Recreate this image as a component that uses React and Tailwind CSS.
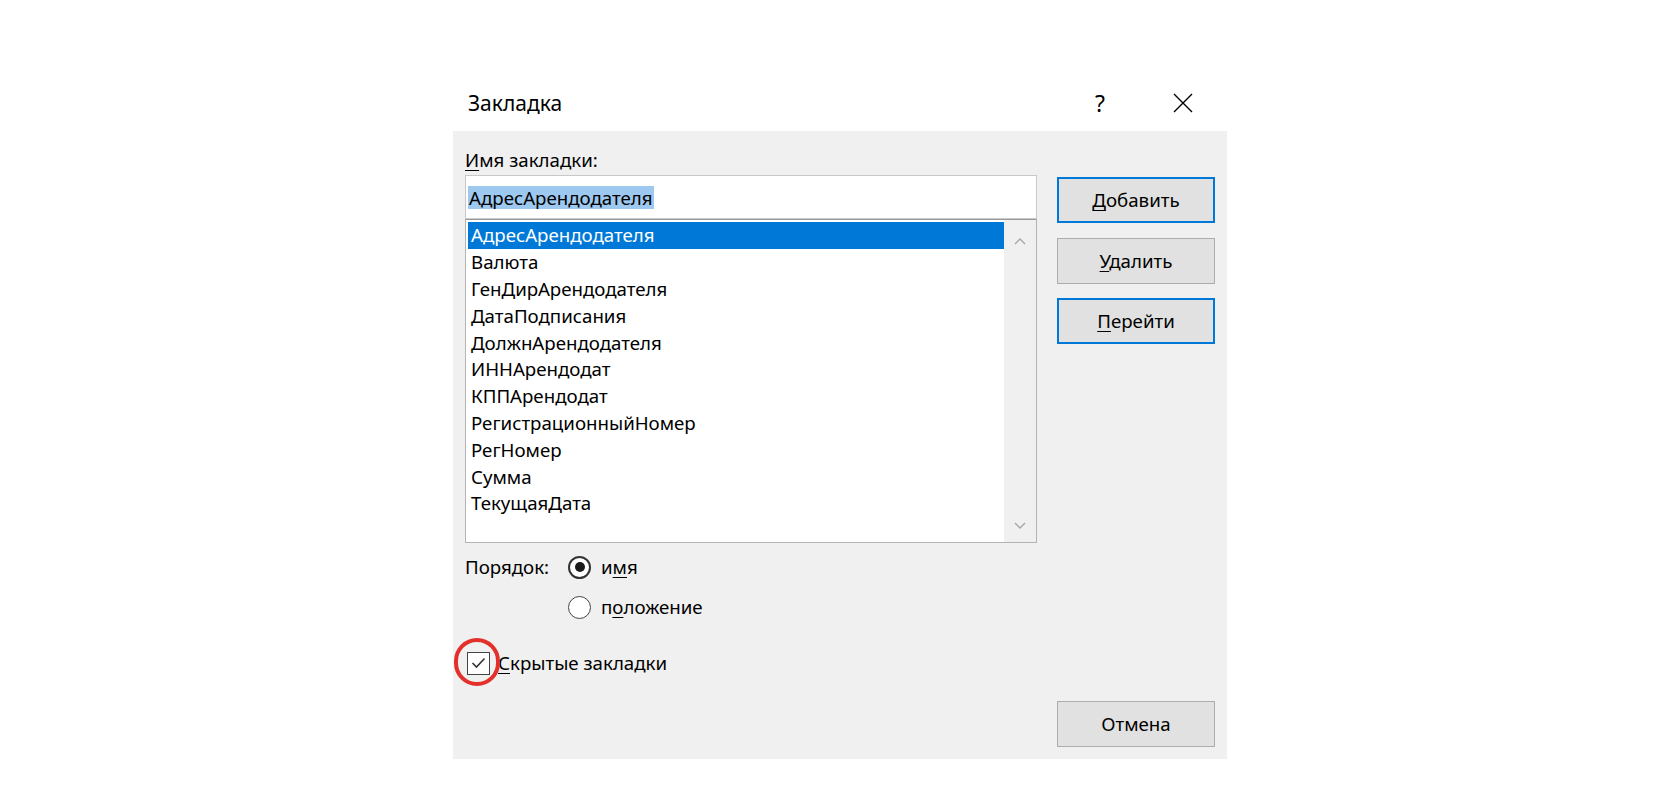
import React from "react";

const items = [
  "АдресАрендодателя",
  "Валюта",
  "ГенДирАрендодателя",
  "ДатаПодписания",
  "ДолжнАрендодателя",
  "ИННАрендодат",
  "КППАрендодат",
  "РегистрационныйНомер",
  "РегНомер",
  "Сумма",
  "ТекущаяДата",
];

function Btn({ children, primary }) {
  return (
    <div
      className={
        "h-[46px] w-[158px] flex items-center justify-center bg-[#e1e1e1] text-black " +
        (primary ? "border-2 border-[#0078d7]" : "border border-[#adadad]")
      }
    >
      {children}
    </div>
  );
}

export default function App() {
  return (
    <div
      className="w-full h-[798px] bg-white flex justify-center text-[18.7px] text-black"
      style={{ fontFamily: '"Noto Sans", "Open Sans", sans-serif' }}
    >
      <div className="w-[774px] pt-[75px] flex flex-col">
        {/* title bar */}
        <div className="h-[56px] flex items-center pl-[15px] pr-[34px]">
          <div className="flex-1 text-[21px] leading-none">Закладка</div>
          <div className="text-[23px] leading-none mr-[68px]">?</div>
          <svg width="20" height="20" viewBox="0 0 20 20">
            <path d="M1 1 L19 19 M19 1 L1 19" stroke="#000" strokeWidth="1.4" fill="none" />
          </svg>
        </div>
        {/* body */}
        <div className="h-[628px] bg-[#f0f0f0] flex px-[12px] pb-[12px]">
          <div className="w-[572px] flex flex-col">
            <div className="mt-[17px] h-[24px] leading-[24px] mb-[3px]">
              <u className="underline-offset-[3px]">И</u>мя закладки:
            </div>
            <div className="h-[44px] bg-white border border-[#c8c8c8] flex items-center pl-[2px]">
              <span className="bg-[#9dc8ef] px-[1px] leading-[23px]">АдресАрендодателя</span>
            </div>
            <div className="h-[324px] bg-white border border-[#b4b4b4] border-t-[#9a9a9a] flex">
              <div className="flex-1 pt-[2px] pl-[2px]">
                {items.map((t, i) => (
                  <div
                    key={t}
                    className={
                      "h-[26.8px] flex items-center pl-[3px] " +
                      (i === 0 ? "bg-[#0078d7] text-white" : "text-black")
                    }
                  >
                    {t}
                  </div>
                ))}
              </div>
              <div className="w-[32px] bg-[#f0f0f0] flex flex-col items-center justify-between pt-[18px] pb-[13px]">
                <svg width="12" height="7" viewBox="0 0 12 7">
                  <path d="M1 6 L6 1 L11 6" stroke="#a6a6a6" strokeWidth="1.4" fill="none" />
                </svg>
                <svg width="12" height="7" viewBox="0 0 12 7">
                  <path d="M1 1 L6 6 L11 1" stroke="#a6a6a6" strokeWidth="1.4" fill="none" />
                </svg>
              </div>
            </div>
            {/* order */}
            <div className="mt-[12px] flex">
              <div className="w-[103px] h-[24px] leading-[24px]">Порядок:</div>
              <div className="flex flex-col gap-[16px]">
                <div className="flex items-center h-[24px]">
                  <div className="w-[23px] h-[23px] rounded-full border-2 border-[#333] bg-white flex items-center justify-center">
                    <div className="w-[10px] h-[10px] rounded-full bg-[#1a1a1a]" />
                  </div>
                  <span className="ml-[10px]">
                    и<u className="underline-offset-[3px]">м</u>я
                  </span>
                </div>
                <div className="flex items-center h-[24px]">
                  <div className="w-[23px] h-[23px] rounded-full border-[1.5px] border-[#444] bg-white" />
                  <span className="ml-[10px]">
                    п<u className="underline-offset-[3px]">о</u>ложение
                  </span>
                </div>
              </div>
            </div>
            {/* checkbox */}
            <div className="mt-[32px] flex items-center relative h-[24px]">
              <div className="ml-[2px] w-[23px] h-[23px] border-[1.5px] border-[#444] bg-white flex items-center justify-center">
                <svg width="15" height="12" viewBox="0 0 15 12">
                  <path d="M1.5 6 L5.5 10 L13.5 1.5" stroke="#333" strokeWidth="1.6" fill="none" />
                </svg>
              </div>
              <span className="ml-[8px]">
                <u className="underline-offset-[3px]">С</u>крытые закладки
              </span>
              <div className="absolute left-[-11px] top-[-13px] w-[46px] h-[48px] rounded-full border-[4px] border-[#e3302b]" />
            </div>
          </div>
          <div className="ml-[20px] w-[158px] flex flex-col pt-[46px]">
            <Btn primary>
              <span>
                <u className="underline-offset-[3px]">Д</u>обавить
              </span>
            </Btn>
            <div className="h-[15px]" />
            <Btn>
              <span>
                <u className="underline-offset-[3px]">У</u>далить
              </span>
            </Btn>
            <div className="h-[14px]" />
            <Btn primary>
              <span>
                <u className="underline-offset-[3px]">П</u>ерейти
              </span>
            </Btn>
            <div className="mt-auto">
              <Btn>Отмена</Btn>
            </div>
          </div>
        </div>
      </div>
    </div>
  );
}
